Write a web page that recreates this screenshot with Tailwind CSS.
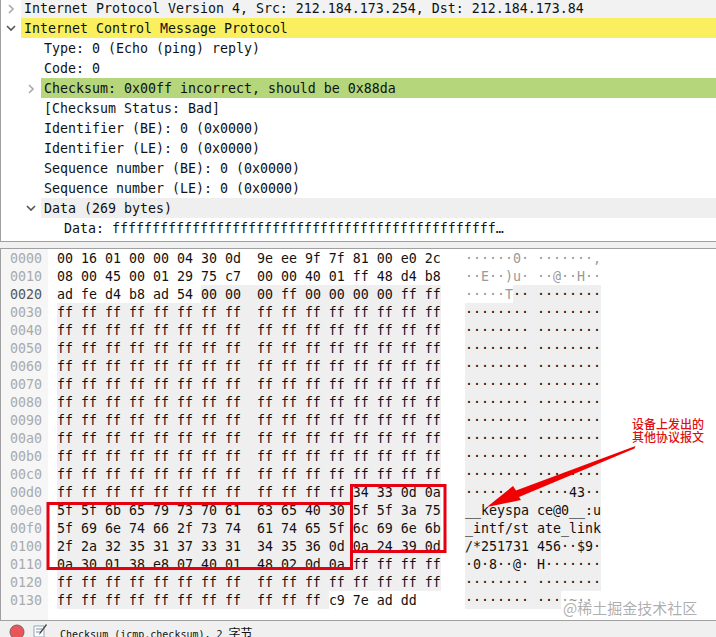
<!DOCTYPE html>
<html lang="en">
<head>
    <meta charset="UTF-8">
    <title>Wireshark packet detail</title>
    <script src="https://cdn.jsdelivr.net/npm/@tailwindcss/browser@4"></script>
</head>
<body class="bg-white">
    <div class="relative w-[716px] h-[637px] overflow-hidden flex flex-col bg-[#f0f0f0] font-['DejaVu_Sans_Mono','Noto_Sans_CJK_SC',monospace] text-[13.29px] text-[#111]">

        <!-- packet tree -->
        <div class="h-[242px] shrink-0 bg-white border-b border-l border-[#a0a0a0] flex flex-col">
            <div class="h-[18px] flex leading-[18px]">
                <svg class="w-[20px] h-[18px] shrink-0" viewBox="0 0 20 18"><path d="M8 5l4 4-4 4" fill="none" stroke="#a8a8a8" stroke-width="1.6"/></svg>
                <div class="flex-1 bg-[#f2f2f2] pl-[3px] whitespace-pre">Internet Protocol Version 4, Src: 212.184.173.254, Dst: 212.184.173.84</div>
            </div>
            <div class="h-[20px] flex leading-[22px]">
                <svg class="w-[20px] h-[20px] shrink-0" viewBox="0 0 20 20"><path d="M6 8l4 4 4-4" fill="none" stroke="#555" stroke-width="1.6"/></svg>
                <div class="flex-1 bg-[#faf05f] pl-[3px]">Internet Control Message Protocol</div>
            </div>
            <div class="h-[20px] leading-[22px] pl-[43px]">Type: 0 (Echo (ping) reply)</div>
            <div class="h-[20px] leading-[22px] pl-[43px]">Code: 0</div>
            <div class="h-[20px] flex leading-[22px]">
                <svg class="w-[40px] h-[20px] shrink-0" viewBox="0 0 40 20"><path d="M28 7l4 4-4 4" fill="none" stroke="#a8a8a8" stroke-width="1.6"/></svg>
                <div class="flex-1 bg-[#b5d67a] pl-[3px]">Checksum: 0x00ff incorrect, should be 0x88da</div>
            </div>
            <div class="h-[20px] leading-[22px] pl-[43px]">[Checksum Status: Bad]</div>
            <div class="h-[20px] leading-[22px] pl-[43px]">Identifier (BE): 0 (0x0000)</div>
            <div class="h-[20px] leading-[22px] pl-[43px]">Identifier (LE): 0 (0x0000)</div>
            <div class="h-[20px] leading-[22px] pl-[43px]">Sequence number (BE): 0 (0x0000)</div>
            <div class="h-[20px] leading-[22px] pl-[43px]">Sequence number (LE): 0 (0x0000)</div>
            <div class="h-[20px] flex leading-[22px]">
                <svg class="w-[40px] h-[20px] shrink-0" viewBox="0 0 40 20"><path d="M26 8l4 4 4-4" fill="none" stroke="#555" stroke-width="1.6"/></svg>
                <div class="flex-1 bg-[#efefef] pl-[3px]">Data (269 bytes)</div>
            </div>
            <div class="h-[20px] leading-[22px] pl-[63px]">Data: ffffffffffffffffffffffffffffffffffffffffffffffff…</div>
        </div>

        <!-- hex dump -->
        <div class="mt-[6px] h-[373px] shrink-0 bg-white border-y border-l border-[#a0a0a0] flex">
            <div id="offsets" class="w-[47px] shrink-0 bg-[#f6f6f6] pl-[9px] text-[#aaa]"></div>
            <div id="dump" class="pl-[9px]"></div>
        </div>

        <!-- status bar -->
        <div class="flex-1 flex items-start">
            <svg class="w-[60px] h-[16px] shrink-0" viewBox="0 0 60 16">
                <circle cx="17" cy="11" r="7" fill="#e8555a" stroke="#8a5a5c"/>
                <path d="M34 5h10v11h-10z" fill="#fff" stroke="#8fa6b8"/>
                <path d="M36 8h6M36 11h5" stroke="#7a8a9a"/>
                <path d="M47 4l-6 8-2 2 1-3 6-8z" fill="#444"/>
            </svg>
            <div class="text-[10px] leading-[14px] pt-[6px] whitespace-pre">Checksum (icmp.checksum), 2 <span class="text-[12px]">字节</span></div>
        </div>

        <!-- annotation drawn on top of the screenshot -->
        <svg class="absolute left-0 top-0 w-[716px] h-[637px] pointer-events-none" viewBox="0 0 716 637">
            <path d="M48 503.5H351.5V568.5H48Z" fill="none" stroke="#e60012" stroke-width="3"/>
            <path d="M351.5 485.5H445V551.5H351.5Z" fill="none" stroke="#e60012" stroke-width="3"/>
            <path d="M635.5 446 L634.5 448.5 L519 497 L521 500 L487 507 L513 486 L516 490.5Z" fill="#f00000"/>
        </svg>
        <div class="absolute left-[632px] top-[417px] w-[76px] text-[12px] leading-[13px] text-[#e01010] font-medium font-['Noto_Sans_CJK_SC',sans-serif] whitespace-pre">设备上发出的
其他协议报文</div>
        <div class="absolute left-[563px] top-[598px] text-[15px] leading-[20px] text-[#8a8a8a]/70 font-['Noto_Sans_CJK_SC',sans-serif]">@稀土掘金技术社区</div>
    </div>

    <script>
        const ffRow = 'ff ff ff ff ff ff ff ff ff ff ff ff ff ff ff ff';
        const hexRows = [
            '00 16 01 00 00 04 30 0d 9e ee 9f 7f 81 00 e0 2c',
            '08 00 45 00 01 29 75 c7 00 00 40 01 ff 48 d4 b8',
            'ad fe d4 b8 ad 54 00 00 00 ff 00 00 00 00 ff ff',
            ffRow, ffRow, ffRow, ffRow, ffRow, ffRow, ffRow, ffRow, ffRow, ffRow,
            'ff ff ff ff ff ff ff ff ff ff ff ff 34 33 0d 0a',
            '5f 5f 6b 65 79 73 70 61 63 65 40 30 5f 5f 3a 75',
            '5f 69 6e 74 66 2f 73 74 61 74 65 5f 6c 69 6e 6b',
            '2f 2a 32 35 31 37 33 31 34 35 36 0d 0a 24 39 0d',
            '0a 30 01 38 e8 07 40 01 48 02 0d 0a ff ff ff ff',
            ffRow,
            'ff ff ff ff ff ff ff ff ff ff ff c9 7e ad dd'
        ];

        // bytes 0x26 to 0x13a are the selected field
        const firstMarked = 0x26;
        const lastMarked = 0x13a;

        function hexText(bytes) {
            return bytes.map((b, i) => b + (i === 7 ? '  ' : i < bytes.length - 1 ? ' ' : '')).join('');
        }

        function asciiText(bytes) {
            return bytes.map((b, i) => {
                const code = parseInt(b, 16);
                const ch = code >= 32 && code < 127 ? String.fromCharCode(code) : '·';
                return ch + (i === 7 ? ' ' : '');
            }).join('');
        }

        function splitRow(bytes, rowStart) {
            const from = Math.max(0, firstMarked - rowStart);
            const to = Math.min(bytes.length, lastMarked - rowStart + 1);
            return [Math.min(from, bytes.length), Math.max(to, 0)];
        }

        document.getElementById('offsets').innerHTML = hexRows.map((_, r) => {
            const label = (r * 16).toString(16).padStart(4, '0');
            return `<div class="h-[18px] leading-[20px] ${r === 2 ? 'text-[#555]' : ''}">${label}</div>`;
        }).join('');

        document.getElementById('dump').innerHTML = hexRows.map((row, r) => {
            const bytes = row.split(' ');
            const [from, to] = splitRow(bytes, r * 16);
            // keep the column gaps by cutting the row's text into runs
            const hexPlain = hexText(bytes);
            const cut = n => n * 3 + (n > 8 ? 1 : 0);
            const hexA = hexPlain.slice(0, cut(from));
            const hexB = hexPlain.slice(cut(from), to === bytes.length ? undefined : cut(to));
            const hexC = to === bytes.length ? '' : hexPlain.slice(cut(to));
            const ascPlain = asciiText(bytes);
            const acut = n => n + (n > 7 ? 1 : 0);
            const ascA = ascPlain.slice(0, acut(from));
            const ascB = ascPlain.slice(acut(from), acut(to));
            const ascC = ascPlain.slice(acut(to));
            return `<div class="h-[18px] leading-[20px] flex whitespace-pre">
                <div class="w-[408px] shrink-0"><span class="inline-block h-[18px] align-top">${hexA}</span><span class="inline-block h-[18px] align-top ${hexB.length ? 'bg-[#efefef]' : ''}">${hexB}</span><span class="inline-block h-[18px] align-top">${hexC}</span></div>
                <div class="shrink-0"><span class="inline-block h-[18px] align-top text-[#999]">${ascA}</span><span class="inline-block h-[18px] align-top bg-[#efefef]">${ascB}</span><span class="inline-block h-[18px] align-top text-[#999]">${ascC}</span></div>
            </div>`;
        }).join('');
    </script>
</body>
</html>
